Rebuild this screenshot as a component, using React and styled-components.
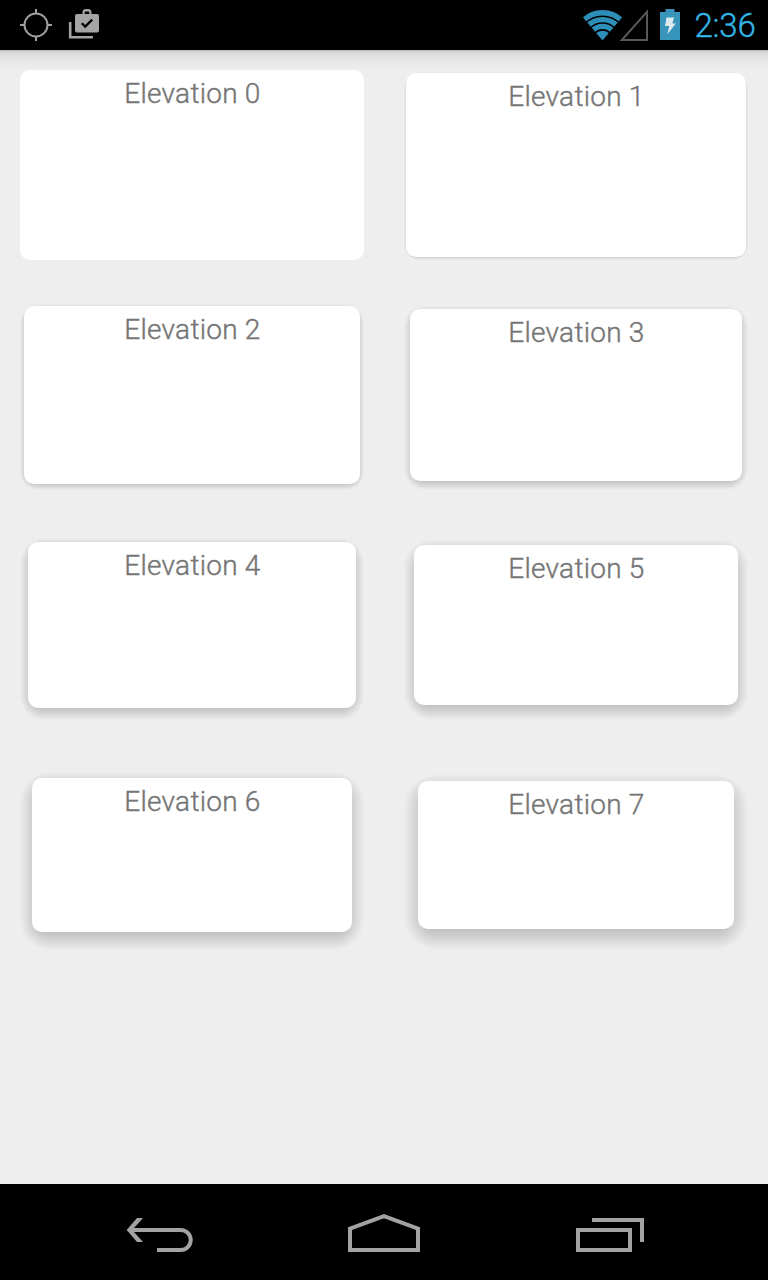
import React from 'react';
import styled, { createGlobalStyle, css } from 'styled-components';

const GlobalStyle = createGlobalStyle`
  * { box-sizing: border-box; }
  body { margin: 0; background: #eeeeee; font-family: Roboto, sans-serif; }
`;

const CORNER = 10;

const Screen = styled.div`
  display: flex;
  flex-direction: column;
  width: 768px;
  height: 1280px;
  background: #eeeeee;
  overflow: hidden;
`;

const StatusBar = styled.header`
  display: flex;
  align-items: flex-start;
  justify-content: space-between;
  flex: none;
  height: 50px;
  background: #000;
`;

const StatusGroup = styled.div`
  display: flex;
  height: 50px;

  svg { display: block; flex: none; }
`;

const Clock = styled.time`
  width: 60px;
  margin-left: 12.5px;
  margin-right: 13.5px;
  color: #33b5e5;
  font-size: 33px;
  font-weight: 300;
  -webkit-text-stroke: 0.4px #33b5e5;
  line-height: 52px;
  white-space: nowrap;
  letter-spacing: -0.2px;
`;

const Content = styled.main`
  flex: 1;
  padding: 20px;
  background: linear-gradient(#b9b9b9 0, #d5d5d5 2px, #dedede 5px, #e8e8e8 12px, #eeeeee 20px) no-repeat 0 0 / 100% 20px;
`;

const CardGrid = styled.div`
  display: grid;
  grid-template-columns: repeat(2, 344px);
  grid-auto-rows: 190px;
  gap: 40px;
`;

const Slot = styled.div`
  display: flex;
  padding-top: ${(p) => p.$level * 2}px;
`;

/* Linear edges joined by radial corners, heavier below the card than above it. */
const shadowLayers = (level) => {
  const size = level * 3 + 2;
  const r = CORNER + size;
  const from = 'rgba(0,0,0,0.2157)';
  const to = 'rgba(0,0,0,0.004)';
  const corner = (at) =>
    `radial-gradient(circle ${r}px at ${at}, ${from} ${CORNER}px, ${to} ${r}px, transparent ${r}px)`;
  const edge = (dir) => `linear-gradient(${dir}, ${to}, ${from} ${size}px, ${from})`;
  return css`
    background-image:
      ${corner('100% 100%')}, ${corner('0 100%')}, ${corner('100% 0')}, ${corner('0 0')},
      ${edge('to bottom')}, ${edge('to top')}, ${edge('to right')}, ${edge('to left')};
    background-size:
      ${r}px ${r}px, ${r}px ${r}px, ${r}px ${r}px, ${r}px ${r}px,
      calc(100% - ${2 * r}px) ${r}px, calc(100% - ${2 * r}px) ${r}px,
      ${r}px calc(100% - ${2 * r}px), ${r}px calc(100% - ${2 * r}px);
    background-position:
      0 0, 100% 0, 0 100%, 100% 100%,
      50% 0, 50% 100%, 0 50%, 100% 50%;
    background-repeat: no-repeat;
  `;
};

const Shadow = styled.div`
  display: flex;
  flex: 1;
  padding: ${(p) => `${p.$level}px ${p.$level * 2}px ${p.$level * 3}px`};
  ${(p) => p.$level > 0 && shadowLayers(p.$level)}
`;

const Card = styled.section`
  flex: 1;
  padding: 7px 0 0 1px;
  border-radius: ${CORNER}px;
  background: #fff;
  color: #757575;
  font-size: 28px;
  font-weight: 300;
  -webkit-text-stroke: 0.4px #757575;
  letter-spacing: 0.25px;
  line-height: 33px;
  text-align: center;
`;

const NavBar = styled.nav`
  display: flex;
  justify-content: space-between;
  flex: none;
  height: 96px;
  padding: 0 110px;
  background: #000;
`;

const NavButton = styled.button`
  width: 100px;
  height: 96px;
  padding: 0;
  border: 0;
  background: none;

  svg { display: block; fill: none; stroke: #a3a3a3; stroke-width: 4; }
`;

const ArrowHead = styled.path`
  fill: #a3a3a3;
  stroke: none;
`;

const NotificationIcons = () => (
  <svg width="120" height="50" viewBox="0 0 120 50">
    <g fill="none" stroke="#a0a0a0" strokeWidth="2">
      <circle cx="36" cy="25" r="11.5" />
      <path d="M36 9v5M36 36v5M20 25h5M47 25h5" />
    </g>
    <path d="M70.2 22v15.2H93" fill="none" stroke="#a3a3a3" strokeWidth="2.6" />
    <path
      d="M77 14h5.5v-1.5a3.5 3.5 0 0 1 3.5-3.5h2a3.5 3.5 0 0 1 3.5 3.5V14H97a2 2 0 0 1 2 2v14.5a2 2 0 0 1-2 2H77a2 2 0 0 1-2-2V16a2 2 0 0 1 2-2zM84.7 14h4.6v-1.3a1.2 1.2 0 0 0-1.2-1.2h-2.2a1.2 1.2 0 0 0-1.2 1.2z"
      fill="#a5a5a5"
      fillRule="evenodd"
    />
    <path d="M81.8 23.2l3.4 3.4 7-7" fill="none" stroke="#000" strokeWidth="2.3" />
  </svg>
);

const ConnectivityIcons = () => (
  <svg width="100" height="50" viewBox="582 0 100 50">
    <defs>
      <clipPath id="fan">
        <path d="M602.5 40.5L582 16.2V8h41v8.2z" />
      </clipPath>
    </defs>
    <g clipPath="url(#fan)" fill="none" stroke="#2d8fb7" strokeWidth="5.4">
      <circle cx="602.5" cy="40.5" r="27.8" />
      <circle cx="602.5" cy="40.5" r="20.9" />
      <circle cx="602.5" cy="40.5" r="14.1" strokeWidth="5.2" />
      <circle cx="602.5" cy="40.5" r="4.9" strokeWidth="9.8" />
    </g>
    <path d="M621.8 40H647V11.8z" fill="none" stroke="#585858" strokeWidth="2" />
    <path d="M665.5 9h9v3h5.5v28h-20V12h5.5z" fill="#3794ba" />
    <path d="M666.5 17.5h7.5l-1.6 6h3.4l-8.3 10.8 1.7-8.3h-4.2z" fill="#dceaf0" />
  </svg>
);

export default function App() {
  return (
    <>
      <GlobalStyle />
      <Screen>
        <StatusBar>
          <StatusGroup><NotificationIcons /></StatusGroup>
          <StatusGroup>
            <ConnectivityIcons />
            <Clock>2:36</Clock>
          </StatusGroup>
        </StatusBar>
        <Content>
          <CardGrid>
            {[0, 1, 2, 3, 4, 5, 6, 7].map((level) => (
              <Slot key={level} $level={level}>
                <Shadow $level={level}>
                  <Card>Elevation {level}</Card>
                </Shadow>
              </Slot>
            ))}
          </CardGrid>
        </Content>
        <NavBar>
          <NavButton aria-label="Back">
            <svg width="100" height="96" viewBox="0 0 100 96">
              <path d="M20 46H70.7a10 10 0 0 1 0 20H47" />
              <ArrowHead d="M27 34h6L22.2 46 33 58h-6L16.7 46z" />
            </svg>
          </NavButton>
          <NavButton aria-label="Home">
            <svg width="100" height="96" viewBox="0 0 100 96">
              <path d="M16 66V44.6L50 32.2l34 12.4V66z" />
            </svg>
          </NavButton>
          <NavButton aria-label="Recent apps">
            <svg width="100" height="96" viewBox="0 0 100 96">
              <path d="M20 46h52v20H20zM34 36h50v22" />
            </svg>
          </NavButton>
        </NavBar>
      </Screen>
    </>
  );
}
